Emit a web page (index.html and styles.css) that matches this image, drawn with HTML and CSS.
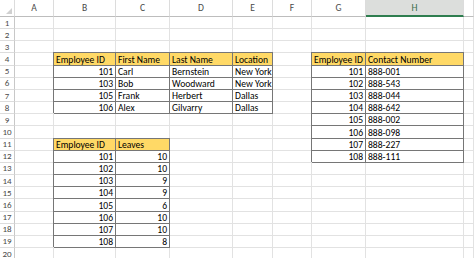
FILE: index.html
```html
<!DOCTYPE html>
<html lang="en">
<head>
    <meta charset="UTF-8">
    <title>Employees</title>
    <link rel="stylesheet" href="styles.css">
</head>
<body>
    <table class="sheet">
        <colgroup>
            <col class="w-rh"><col class="w-a"><col class="w-b"><col class="w-c"><col class="w-d">
            <col class="w-e"><col class="w-f"><col class="w-g"><col class="w-h"><col class="w-i">
        </colgroup>
        <thead>
            <tr>
                <th class="corner"></th>
                <th>A</th><th>B</th><th>C</th><th>D</th><th>E</th><th>F</th><th>G</th>
                <th class="sel">H</th><th></th>
            </tr>
        </thead>
        <tbody>
            <tr><th>1</th><td></td><td></td><td></td><td></td><td></td><td></td><td></td><td></td><td></td></tr>
            <tr><th>2</th><td></td><td></td><td></td><td></td><td></td><td></td><td></td><td></td><td></td></tr>
            <tr><th>3</th><td></td><td></td><td></td><td></td><td></td><td></td><td></td><td></td><td></td></tr>
            <tr>
                <th>4</th><td></td>
                <td class="d hd">Employee ID</td><td class="d hd">First Name</td><td class="d hd">Last Name</td><td class="d hd">Location</td>
                <td></td>
                <td class="d hd">Employee ID</td><td class="d hd">Contact Number</td><td></td>
            </tr>
            <tr>
                <th>5</th><td></td>
                <td class="d num">101</td><td class="d">Carl</td><td class="d">Bernstein</td><td class="d">New York</td>
                <td></td>
                <td class="d num">101</td><td class="d">888-001</td><td></td>
            </tr>
            <tr>
                <th>6</th><td></td>
                <td class="d num">103</td><td class="d">Bob</td><td class="d">Woodward</td><td class="d">New York</td>
                <td></td>
                <td class="d num">102</td><td class="d">888-543</td><td></td>
            </tr>
            <tr>
                <th>7</th><td></td>
                <td class="d num">105</td><td class="d">Frank</td><td class="d">Herbert</td><td class="d">Dallas</td>
                <td></td>
                <td class="d num">103</td><td class="d">888-044</td><td></td>
            </tr>
            <tr>
                <th>8</th><td></td>
                <td class="d num">106</td><td class="d">Alex</td><td class="d">Gilvarry</td><td class="d">Dallas</td>
                <td></td>
                <td class="d num">104</td><td class="d">888-642</td><td></td>
            </tr>
            <tr>
                <th>9</th><td></td><td></td><td></td><td></td><td></td><td></td>
                <td class="d num">105</td><td class="d">888-002</td><td></td>
            </tr>
            <tr>
                <th>10</th><td></td><td></td><td></td><td></td><td></td><td></td>
                <td class="d num">106</td><td class="d">888-098</td><td></td>
            </tr>
            <tr>
                <th>11</th><td></td>
                <td class="d hd">Employee ID</td><td class="d hd">Leaves</td>
                <td></td><td></td><td></td>
                <td class="d num">107</td><td class="d">888-227</td><td></td>
            </tr>
            <tr>
                <th>12</th><td></td>
                <td class="d num">101</td><td class="d num">10</td>
                <td></td><td></td><td></td>
                <td class="d num">108</td><td class="d">888-111</td><td></td>
            </tr>
            <tr><th>13</th><td></td><td class="d num">102</td><td class="d num">10</td><td></td><td></td><td></td><td></td><td></td><td></td></tr>
            <tr><th>14</th><td></td><td class="d num">103</td><td class="d num">9</td><td></td><td></td><td></td><td></td><td></td><td></td></tr>
            <tr><th>15</th><td></td><td class="d num">104</td><td class="d num">9</td><td></td><td></td><td></td><td></td><td></td><td></td></tr>
            <tr><th>16</th><td></td><td class="d num">105</td><td class="d num">6</td><td></td><td></td><td></td><td></td><td></td><td></td></tr>
            <tr><th>17</th><td></td><td class="d num">106</td><td class="d num">10</td><td></td><td></td><td></td><td></td><td></td><td></td></tr>
            <tr><th>18</th><td></td><td class="d num">107</td><td class="d num">10</td><td></td><td></td><td></td><td></td><td></td><td></td></tr>
            <tr><th>19</th><td></td><td class="d num">108</td><td class="d num">8</td><td></td><td></td><td></td><td></td><td></td><td></td></tr>
            <tr><th>20</th><td></td><td></td><td></td><td></td><td></td><td></td><td></td><td></td><td></td></tr>
        </tbody>
    </table>
</body>
</html>
```

FILE: styles.css
```css
body {
    margin: 0;
    background: #fff;
    overflow: hidden;
    font-family: Carlito, Lato, 'Liberation Sans', sans-serif;
    font-size: 9.6px;
    color: #000;
}

.sheet {
    table-layout: fixed;
    border-collapse: separate;
    border-spacing: 0;
    width: 474px;
}

.w-rh { width: 15px; }
.w-a { width: 39px; }
.w-b { width: 62px; }
.w-c { width: 54px; }
.w-d { width: 63px; }
.w-e { width: 40px; }
.w-f { width: 39px; }
.w-g { width: 54px; }
.w-h { width: 98px; }
.w-i { width: 10px; }

thead tr {
    height: 17px;
}

tbody tr {
    height: 12.16px;
}

th, td {
    padding: 0 2px;
    white-space: nowrap;
    overflow: hidden;
    line-height: 10px;
}

/* column letters and row numbers */
th {
    font-weight: normal;
    color: #4a4a4a;
    background: #fff;
    border-right: 1px solid #dcdcdc;
    border-bottom: 1px solid #dcdcdc;
    text-align: center;
}

thead th {
    border-bottom-color: #bdbdbd;
    vertical-align: middle;
}

thead th.sel {
    background: #dcdedc;
    color: #3c6e4d;
    border-bottom: 2px solid #2e7d4f;
}

tbody th {
    padding: 0;
    font-size: 9px;
    border-right-color: #c8c8c8;
}

.corner {
    position: relative;
}

.corner::after {
    content: "";
    position: absolute;
    right: 2px;
    bottom: 2px;
    border-style: solid;
    border-width: 0 0 6px 6px;
    border-color: transparent transparent #d0d0d0 transparent;
}

/* empty cells show the sheet gridlines */
td {
    background: #fff;
    border-right: 1px solid #e2e2e2;
    border-bottom: 1px solid #e2e2e2;
    text-align: left;
    vertical-align: bottom;
}

/* bordered data ranges; the shadow draws their top and left edges */
td.d {
    border-right-color: #767676;
    border-bottom-color: #767676;
    box-shadow: -1px -1px 0 #767676, 0 -1px 0 #767676;
}

td.hd {
    background: #ffd966;
}

td.num {
    text-align: right;
}
```
